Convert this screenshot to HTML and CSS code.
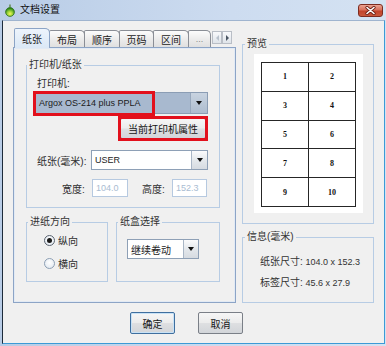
FILE: index.html
```html
<!DOCTYPE html>
<html lang="zh-CN">
<head>
<meta charset="utf-8">
<title>文档设置</title>
<link rel="stylesheet" href="styles.css">
</head>
<body>
<div class="window">
  <div class="titlebar">
    <svg class="app-icon" width="10" height="13" viewBox="0 0 10 13">
      <defs>
        <radialGradient id="gi" cx="50%" cy="70%" r="60%">
          <stop offset="0" stop-color="#f4f85a"/>
          <stop offset="0.5" stop-color="#9ad23a"/>
          <stop offset="1" stop-color="#2f8a1c"/>
        </radialGradient>
      </defs>
      <path d="M5 0.5 L5 3.5" stroke="#4c7a2a" stroke-width="1.2"/>
      <circle cx="5" cy="8" r="4.4" fill="url(#gi)" stroke="#2f6e1a" stroke-width="0.8"/>
    </svg>
    <span class="title">文档设置</span>
    <span class="close">
      <svg width="11" height="9" viewBox="0 0 11 9">
        <path d="M2 1.5 L9 7.5 M9 1.5 L2 7.5" stroke="#6a1e14" stroke-width="3.2" stroke-linecap="round"/>
        <path d="M2 1.5 L9 7.5 M9 1.5 L2 7.5" stroke="#ffffff" stroke-width="1.6" stroke-linecap="round"/>
      </svg>
    </span>
  </div>
  <div class="client">
    <div class="main">
      <div class="left">
        <div class="tabs">
          <div class="tab active w36">纸张</div>
          <div class="tab w36">布局</div>
          <div class="tab w36">顺序</div>
          <div class="tab w35">页码</div>
          <div class="tab w36">区间</div>
          <div class="tab w23 more">...</div>
          <div class="tab-scroll">
            <span class="sbtn"><span class="tri-left"></span></span>
            <span class="sbtn"><span class="tri-right"></span></span>
          </div>
        </div>
        <div class="panel">
          <section class="group g-printer">
            <div class="group-title t0">打印机/纸张</div>
            <div class="p-label">打印机:</div>
            <div class="combo c-printer marked">
              <span class="combo-val num">Argox OS-214 plus PPLA</span>
              <span class="combo-btn"><span class="tri-down"></span></span>
            </div>
            <button class="btn btn-props">当前打印机属性</button>
            <div class="paper-row">
              <span class="row-label">纸张(毫米):</span>
              <div class="combo c-paper">
                <span class="combo-val num">USER</span>
                <span class="combo-btn light"><span class="tri-down"></span></span>
              </div>
            </div>
            <div class="dims-row">
              <span class="dim-label">宽度:</span>
              <span class="inp num w36i">104.0</span>
              <span class="dim-label second">高度:</span>
              <span class="inp num w35i">152.3</span>
            </div>
          </section>
          <div class="bottom-row">
            <section class="group g-dir">
              <div class="group-title">进纸方向</div>
              <div class="radio-row first"><span class="radio on"><span class="dot"></span></span><span class="radio-text">纵向</span></div>
              <div class="radio-row"><span class="radio"></span><span class="radio-text">横向</span></div>
            </section>
            <section class="group g-tray">
              <div class="group-title">纸盒选择</div>
              <div class="combo c-tray">
                <span class="combo-val">继续卷动</span>
                <span class="combo-btn light"><span class="tri-down"></span></span>
              </div>
            </section>
          </div>
        </div>
      </div>
      <div class="right">
        <section class="group g-preview">
          <div class="group-title t2">预览</div>
          <div class="paper">
            <div class="label-grid">
              <div class="cell">1</div><div class="cell">2</div>
              <div class="cell">3</div><div class="cell">4</div>
              <div class="cell">5</div><div class="cell">6</div>
              <div class="cell">7</div><div class="cell">8</div>
              <div class="cell">9</div><div class="cell">10</div>
            </div>
          </div>
        </section>
        <section class="group g-info">
          <div class="group-title t2">信息(毫米)</div>
          <div class="info-line first">纸张尺寸: <span class="num">104.0 x 152.3</span></div>
          <div class="info-line">标签尺寸: <span class="num">45.6 x 27.9</span></div>
        </section>
      </div>
    </div>
    <div class="footer">
      <button class="btn btn-ok">确定</button>
      <button class="btn btn-cancel">取消</button>
    </div>
  </div>
</div>
</body>
</html>
```
FILE: styles.css
```css
html, body {
  margin: 0;
  padding: 0;
  background: #c6d8ee;
}
body {
  width: 386px;
  height: 346px;
  overflow: hidden;
  font-family: "Liberation Sans", "Noto Sans CJK SC", sans-serif;
  font-size: 10px;
  color: #2e2e2e;
}
.num { font-size: 9px; }

.window {
  width: 386px;
  height: 346px;
  box-sizing: border-box;
  padding: 0 1px 2px 2px;
  background: linear-gradient(to right, #b8cce6, #cddcf0 60%, #d4e2f2);
  display: flex;
  flex-direction: column;
}
.titlebar {
  height: 20px;
  display: flex;
  align-items: center;
  flex: none;
}
.app-icon { margin-left: 3px; display: block; }
.title {
  margin-left: 5px;
  font-size: 10px;
  color: #111;
  line-height: 14px;
}
.close {
  margin-left: auto;
  margin-right: 2px;
  align-self: flex-start;
  margin-top: 4px;
  width: 25px;
  height: 13px;
  box-sizing: border-box;
  border: 1px solid #7d2c20;
  border-radius: 3px;
  background: linear-gradient(#eba493, #d8715c 45%, #c2432b 55%, #c9583c);
  display: flex;
  align-items: center;
  justify-content: center;
}
.close svg { display: block; }

.client {
  flex: 1;
  background: #f0f0f0;
  border: 1px solid;
  border-color: #9fb4cf #3c9ad6 #3c9ad6 #1d2b3a;
  display: flex;
  flex-direction: column;
}
.main {
  display: flex;
  padding: 7px 0 0 10px;
  gap: 6px;
}
.left {
  width: 223px;
  display: flex;
  flex-direction: column;
}
.tabs {
  height: 19px;
  display: flex;
  align-items: flex-end;
  padding-left: 1px;
}
.tab {
  height: 17px;
  box-sizing: border-box;
  border: 1px solid #8a8e96;
  border-bottom: none;
  border-radius: 2px 5px 0 0;
  background: linear-gradient(#fcfcfc, #ececec 50%, #e0e0e0);
  display: flex;
  align-items: center;
  justify-content: center;
  margin-right: -1px;
  color: #222;
  font-size: 10px;
}
.tab.active {
  height: 20px;
  margin-bottom: -1px;
  background: linear-gradient(#edf4fc, #dbe8f6);
  border-color: #8ca4c6;
  position: relative;
  z-index: 1;
}
.tab.more { color: #888; font-size: 9px; }
.w36 { width: 36px; }
.w35 { width: 35px; }
.w23 { width: 23px; }
.tab-scroll {
  align-self: flex-start;
  margin-top: 3px;
  margin-left: 2px;
  display: flex;
}
.sbtn {
  width: 10px;
  height: 13px;
  box-sizing: border-box;
  border: 1px solid #b9bec6;
  background: linear-gradient(#f8f9fb, #dfe4ea);
  display: flex;
  align-items: center;
  justify-content: center;
}
.tri-left {
  width: 0; height: 0;
  border-top: 3px solid transparent;
  border-bottom: 3px solid transparent;
  border-right: 3px solid #b9c2cd;
}
.tri-right {
  width: 0; height: 0;
  border-top: 3px solid transparent;
  border-bottom: 3px solid transparent;
  border-left: 3px solid #4a5563;
}

.panel {
  height: 256px;
  box-sizing: border-box;
  border: 1px solid #8ca4c6;
  box-shadow: inset 0 0 0 1px #e2eaf4;
  background: #f0f0f0;
  padding: 17px 0 0 12px;
  display: flex;
  flex-direction: column;
}

/* titled group box: the title sits on the top border line */
.group {
  box-sizing: border-box;
  border: 1px solid #b7cce4;
  display: flex;
  flex-direction: column;
  align-items: flex-start;
}
.group-title {
  margin: -8px 0 0 1px;
  padding: 0 2px;
  height: 14px;
  line-height: 14px;
  background: #f0f0f0;
  color: #333;
  white-space: nowrap;
}
.group-title.t0 { margin-left: 0; }
.group-title.t2 { margin-left: 2px; }

.g-printer {
  width: 194px;
  height: 143px;
}
.p-label {
  margin: 5px 0 0 10px;
  line-height: 14px;
}
.combo {
  display: flex;
  box-sizing: border-box;
  border: 1px solid #8ea0b6;
  background: #fff;
  color: #1c1c1c;
  position: relative;
}
.combo-val {
  flex: 1;
  padding-left: 3px;
  display: flex;
  align-items: center;
  white-space: nowrap;
  overflow: hidden;
}
.combo-btn {
  width: 15px;
  flex: none;
  border-left: 1px solid #a9b6c6;
  background: linear-gradient(#e6ebf1, #c9d3de);
  display: flex;
  align-items: center;
  justify-content: center;
}
.combo-btn.light {
  background: linear-gradient(#fbfbfc, #e4e8ec 50%, #d6dbe1);
}
.tri-down {
  width: 0; height: 0;
  border-left: 3.5px solid transparent;
  border-right: 3.5px solid transparent;
  border-top: 4px solid #111;
}
.c-printer {
  margin: 1px 0 0 8px;
  width: 173px;
  height: 22px;
  background: #a8b9cf;
  border-color: #8b9db4;
}
.c-printer .combo-btn {
  width: 16px;
  background: linear-gradient(#c8d3e0, #aebdcf);
  border-left-color: #97a8bd;
}
.marked::after {
  content: "";
  position: absolute;
  left: -3px;
  top: -2px;
  width: 122px;
  height: 25px;
  box-sizing: border-box;
  border: 3px solid #e2101c;
}

.btn {
  font-family: "Liberation Sans", "Noto Sans CJK SC", sans-serif;
  font-size: 10px;
  color: #151515;
  box-sizing: border-box;
  border: 1px solid #7a7f87;
  border-radius: 2px;
  background: linear-gradient(#f6f6f6, #ececec 48%, #dedfe1 52%, #d2d5d9);
  padding: 0;
  display: flex;
  align-items: center;
  justify-content: center;
}
.btn-props {
  margin: 4px 0 0 93px;
  width: 86px;
  height: 21px;
  position: relative;
}
.btn-props::after {
  content: "";
  position: absolute;
  left: -3px;
  top: -3px;
  width: 90px;
  height: 25px;
  box-sizing: border-box;
  border: 3px solid #e2101c;
}

.paper-row {
  display: flex;
  align-items: center;
  margin: 11px 0 0 10px;
  height: 20px;
}
.row-label { width: 54px; white-space: nowrap; }
.c-paper { width: 117px; height: 20px; }

.dims-row {
  display: flex;
  align-items: center;
  margin: 9px 0 0 35px;
  height: 18px;
}
.dim-label { width: 30px; white-space: nowrap; }
.dim-label.second { margin-left: 14px; }
.inp {
  box-sizing: border-box;
  height: 18px;
  border: 1px solid #b6c9e0;
  background: #fff;
  color: #a9bcd2;
  padding-left: 3px;
  display: flex;
  align-items: center;
}
.w36i { width: 36px; }
.w35i { width: 35px; }

.bottom-row {
  display: flex;
  gap: 8px;
  margin-top: 14px;
}
.g-dir { width: 82px; height: 60px; }
.g-tray { width: 104px; height: 60px; }
.radio-row {
  display: flex;
  align-items: center;
  height: 14px;
  margin: 9px 0 0 17px;
}
.radio-row.first { margin-top: 4px; }
.radio {
  width: 11px;
  height: 11px;
  box-sizing: border-box;
  border-radius: 50%;
  border: 1px solid #8d9fb4;
  background: radial-gradient(circle at 50% 40%, #ffffff, #dde5ee);
  display: flex;
  align-items: center;
  justify-content: center;
}
.radio.on { border-color: #5b6470; }
.dot {
  width: 5px;
  height: 5px;
  border-radius: 50%;
  background: #1a1a1a;
}
.radio-text { margin-left: 3px; }
.c-tray {
  margin: 10px 0 0 10px;
  width: 72px;
  height: 20px;
}
.c-tray .combo-btn { width: 14px; }

.right {
  width: 132px;
  display: flex;
  flex-direction: column;
}
.g-preview {
  margin-top: 16px;
  height: 180px;
}
.paper {
  margin: 3px 0 0 11px;
  width: 109px;
  height: 159px;
  box-sizing: border-box;
  background: #fff;
  padding: 8px 7px 6px 7px;
}
.label-grid {
  width: 95px;
  height: 145px;
  box-sizing: border-box;
  padding: 1px;
  gap: 1px;
  background: #262626;
  display: grid;
  grid-template-columns: 1fr 1fr;
  grid-template-rows: repeat(5, 1fr);
}
.cell {
  background: #fff;
  display: flex;
  align-items: center;
  justify-content: center;
  font-family: "Liberation Serif", serif;
  font-size: 8px;
  font-weight: bold;
  color: #111;
}
.g-info {
  margin-top: 13px;
  height: 66px;
}
.info-line {
  padding-left: 17px;
  margin-top: 7px;
  line-height: 14px;
  white-space: nowrap;
  color: #333;
}
.info-line.first { margin-top: 11px; }

.footer {
  display: flex;
  gap: 23px;
  padding-left: 127px;
  margin-top: 9px;
}
.footer .btn {
  width: 45px;
  height: 22px;
}
.btn-ok {
  border-color: #3f6f9f;
  box-shadow: inset 0 0 0 1px #c8e2f6;
}
```
